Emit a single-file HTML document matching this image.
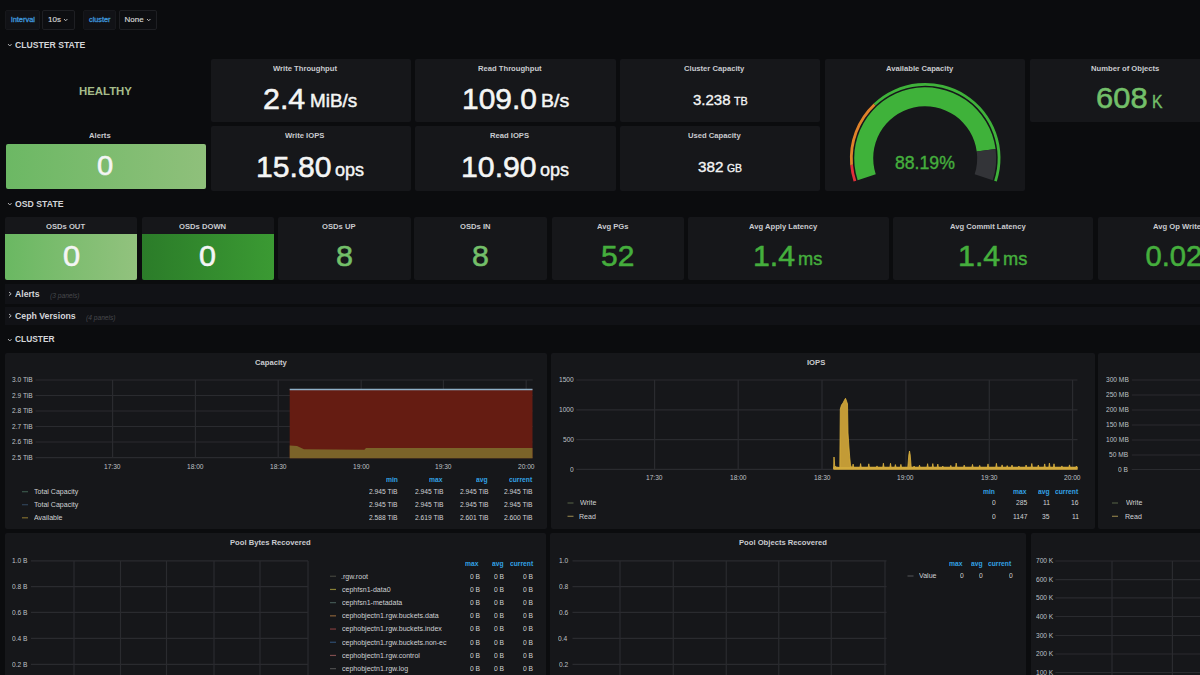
<!DOCTYPE html>
<html><head><meta charset="utf-8"><title>Ceph Cluster - Grafana</title><style>
html,body{margin:0;padding:0;}
body{width:1200px;height:675px;overflow:hidden;background:#0b0c0e;position:relative;font-family:"Liberation Sans",sans-serif;}
.t{position:absolute;white-space:nowrap;transform-origin:0 0;}
.p{position:absolute;}
.s{position:absolute;overflow:visible;}
</style></head><body>
<div class="p" style="left:5px;top:10px;width:35.30px;height:19.70px;background:#111216;border:1px solid #17181c;box-sizing:border-box;border-radius:2px"></div>
<div class="p" style="left:42px;top:10px;width:32.70px;height:19.70px;background:#0d0e11;border:1px solid #1e1f23;box-sizing:border-box;border-radius:2px"></div>
<div class="p" style="left:83px;top:10px;width:33.30px;height:19.70px;background:#111216;border:1px solid #17181c;box-sizing:border-box;border-radius:2px"></div>
<div class="p" style="left:119px;top:10px;width:38.00px;height:19.70px;background:#0d0e11;border:1px solid #1e1f23;box-sizing:border-box;border-radius:2px"></div>
<div class="t" style="left:10.72px;top:17.01px;font-size:6.48px;line-height:6.48px;color:#3d92d6;transform:scaleX(1.148);-webkit-text-stroke:0.3px #3d92d6;">interval</div>
<div class="t" style="left:47.90px;top:16.35px;font-size:7.86px;line-height:7.86px;color:#d8d9da;transform:scaleX(1.018);-webkit-text-stroke:0.15px #d8d9da;">10s</div>
<div class="t" style="left:89.21px;top:17.01px;font-size:6.48px;line-height:6.48px;color:#3d92d6;transform:scaleX(1.123);-webkit-text-stroke:0.3px #3d92d6;">cluster</div>
<div class="t" style="left:124.56px;top:16.25px;font-size:7.97px;line-height:7.97px;color:#d8d9da;-webkit-text-stroke:0.15px #d8d9da;">None</div>
<svg class="s" style="left:62.5px;top:17.8px" width="5.4" height="3.8"><path d="M1 1 L2.70 2.80 L4.40 1" fill="none" stroke="#c8c9ca" stroke-width="0.9"/></svg>
<svg class="s" style="left:146px;top:17.8px" width="5.4" height="3.8"><path d="M1 1 L2.70 2.80 L4.40 1" fill="none" stroke="#c8c9ca" stroke-width="0.9"/></svg>
<svg class="s" style="left:7.3px;top:43.2px" width="5.6" height="4.0"><path d="M1 1 L2.80 3.00 L4.60 1" fill="none" stroke="#a8a9ab" stroke-width="1.0"/></svg>
<div class="t" style="left:14.95px;top:40.30px;font-size:9.80px;line-height:9.80px;color:#d3d5d9;font-weight:bold;transform:scaleX(0.882);">CLUSTER STATE</div>
<svg class="s" style="left:7.3px;top:202px" width="5.6" height="4.0"><path d="M1 1 L2.80 3.00 L4.60 1" fill="none" stroke="#a8a9ab" stroke-width="1.0"/></svg>
<div class="t" style="left:14.85px;top:198.90px;font-size:9.80px;line-height:9.80px;color:#d3d5d9;font-weight:bold;transform:scaleX(0.888);">OSD STATE</div>
<div class="p" style="left:5px;top:283.5px;width:1195.00px;height:20.50px;background:#111216;"></div>
<div class="p" style="left:5px;top:307.3px;width:1195.00px;height:17.70px;background:#111216;"></div>
<svg class="s" style="left:7.5px;top:290.5px" width="4.2" height="5.6"><path d="M1 1 L3.20 2.80 L1 4.60" fill="none" stroke="#b0b1b3" stroke-width="1.0"/></svg>
<svg class="s" style="left:7.5px;top:313px" width="4.2" height="5.6"><path d="M1 1 L3.20 2.80 L1 4.60" fill="none" stroke="#b0b1b3" stroke-width="1.0"/></svg>
<div class="t" style="left:15.28px;top:290.11px;font-size:8.97px;line-height:8.97px;color:#d3d5d9;font-weight:bold;transform:scaleX(0.966);">Alerts</div>
<div class="t" style="left:49.70px;top:291.67px;font-size:7.00px;line-height:7.00px;color:#47494d;font-style:italic;transform:scaleX(0.950);">(3 panels)</div>
<div class="t" style="left:15.15px;top:312.28px;font-size:9.24px;line-height:9.24px;color:#d3d5d9;font-weight:bold;transform:scaleX(0.946);">Ceph Versions</div>
<div class="t" style="left:85.70px;top:314.17px;font-size:7.00px;line-height:7.00px;color:#47494d;font-style:italic;transform:scaleX(0.950);">(4 panels)</div>
<svg class="s" style="left:7.3px;top:338px" width="5.6" height="4.0"><path d="M1 1 L2.80 3.00 L4.60 1" fill="none" stroke="#a8a9ab" stroke-width="1.0"/></svg>
<div class="t" style="left:15.17px;top:334.20px;font-size:9.80px;line-height:9.80px;color:#d3d5d9;font-weight:bold;transform:scaleX(0.854);">CLUSTER</div>
<div class="t" style="left:78.76px;top:85.93px;font-size:11.30px;line-height:11.30px;color:#a6bd8a;font-weight:bold;transform:scaleX(1.008);">HEALTHY</div>
<div class="t" style="left:89.23px;top:131.83px;font-size:8.00px;line-height:8.00px;color:#c9cbcf;font-weight:bold;transform:scaleX(0.955);">Alerts</div>
<div class="p" style="left:5.5px;top:143.8px;width:200.00px;height:45.70px;background:linear-gradient(90deg,#6cb864,#8fc07b);border-radius:2px"></div>
<div class="t" style="left:97.33px;top:152.27px;font-size:28.14px;line-height:28.14px;color:#f4f5f5;transform:scaleX(1.036);-webkit-text-stroke:0.55px #f4f5f5;">0</div>
<div class="p" style="left:210.5px;top:58.5px;width:200.00px;height:63.50px;background:#16171a;border-radius:2px"></div>
<div class="p" style="left:210.5px;top:125.5px;width:200.00px;height:65.00px;background:#16171a;border-radius:2px"></div>
<div class="p" style="left:415px;top:58.5px;width:200.50px;height:63.50px;background:#16171a;border-radius:2px"></div>
<div class="p" style="left:415px;top:125.5px;width:200.50px;height:65.00px;background:#16171a;border-radius:2px"></div>
<div class="p" style="left:620px;top:58.5px;width:200.00px;height:63.50px;background:#16171a;border-radius:2px"></div>
<div class="p" style="left:620px;top:125.5px;width:200.00px;height:65.00px;background:#16171a;border-radius:2px"></div>
<div class="p" style="left:825px;top:59px;width:200.00px;height:132.00px;background:#16171a;border-radius:2px"></div>
<div class="p" style="left:1030px;top:59px;width:202.00px;height:63.00px;background:#16171a;border-radius:2px"></div>
<div class="t" style="left:273.08px;top:64.93px;font-size:8.00px;line-height:8.00px;color:#c9cbcf;font-weight:bold;transform:scaleX(0.955);">Write Throughput</div>
<div class="t" style="left:285.48px;top:132.03px;font-size:8.00px;line-height:8.00px;color:#c9cbcf;font-weight:bold;transform:scaleX(0.955);">Write IOPS</div>
<div class="t" style="left:477.67px;top:64.93px;font-size:8.00px;line-height:8.00px;color:#c9cbcf;font-weight:bold;transform:scaleX(0.955);">Read Throughput</div>
<div class="t" style="left:490.37px;top:132.03px;font-size:8.00px;line-height:8.00px;color:#c9cbcf;font-weight:bold;transform:scaleX(0.955);">Read IOPS</div>
<div class="t" style="left:684.23px;top:64.93px;font-size:8.00px;line-height:8.00px;color:#c9cbcf;font-weight:bold;transform:scaleX(0.955);">Cluster Capacity</div>
<div class="t" style="left:688.47px;top:132.03px;font-size:8.00px;line-height:8.00px;color:#c9cbcf;font-weight:bold;transform:scaleX(0.955);">Used Capacity</div>
<div class="t" style="left:886.11px;top:64.93px;font-size:8.00px;line-height:8.00px;color:#c9cbcf;font-weight:bold;transform:scaleX(0.955);">Available Capacity</div>
<div class="t" style="left:1090.53px;top:64.93px;font-size:8.00px;line-height:8.00px;color:#c9cbcf;font-weight:bold;transform:scaleX(0.955);">Number of Objects</div>
<div class="t" style="left:262.98px;top:83.70px;font-size:29.29px;line-height:29.29px;color:#f4f5f5;transform:scaleX(1.037);-webkit-text-stroke:0.55px #f4f5f5;">2.4</div>
<div class="t" style="left:309.99px;top:93.32px;font-size:17.93px;line-height:17.93px;color:#f4f5f5;transform:scaleX(1.052);-webkit-text-stroke:0.45px #f4f5f5;">MiB/s</div>
<div class="t" style="left:255.74px;top:151.70px;font-size:29.29px;line-height:29.29px;color:#f4f5f5;transform:scaleX(1.029);-webkit-text-stroke:0.55px #f4f5f5;">15.80</div>
<div class="t" style="left:335.28px;top:160.75px;font-size:18.60px;line-height:18.60px;color:#f4f5f5;transform:scaleX(0.970);-webkit-text-stroke:0.45px #f4f5f5;">ops</div>
<div class="t" style="left:461.76px;top:83.70px;font-size:29.29px;line-height:29.29px;color:#f4f5f5;transform:scaleX(1.022);-webkit-text-stroke:0.55px #f4f5f5;">109.0</div>
<div class="t" style="left:540.94px;top:93.32px;font-size:17.93px;line-height:17.93px;color:#f4f5f5;transform:scaleX(1.090);-webkit-text-stroke:0.45px #f4f5f5;">B/s</div>
<div class="t" style="left:460.93px;top:151.96px;font-size:29.57px;line-height:29.57px;color:#f4f5f5;transform:scaleX(1.023);-webkit-text-stroke:0.55px #f4f5f5;">10.90</div>
<div class="t" style="left:539.98px;top:161.25px;font-size:18.60px;line-height:18.60px;color:#f4f5f5;transform:scaleX(0.970);-webkit-text-stroke:0.45px #f4f5f5;">ops</div>
<div class="t" style="left:692.60px;top:92.06px;font-size:15.29px;line-height:15.29px;color:#f4f5f5;transform:scaleX(0.981);-webkit-text-stroke:0.35px #f4f5f5;">3.238</div>
<div class="t" style="left:733.58px;top:96.04px;font-size:10.58px;line-height:10.58px;color:#f4f5f5;transform:scaleX(1.020);-webkit-text-stroke:0.3px #f4f5f5;">TB</div>
<div class="t" style="left:698.19px;top:159.84px;font-size:14.71px;line-height:14.71px;color:#f4f5f5;transform:scaleX(1.036);-webkit-text-stroke:0.35px #f4f5f5;">382</div>
<div class="t" style="left:726.68px;top:163.83px;font-size:10.00px;line-height:10.00px;color:#f4f5f5;transform:scaleX(1.041);-webkit-text-stroke:0.3px #f4f5f5;">GB</div>
<div class="t" style="left:894.71px;top:154.28px;font-size:18.57px;line-height:18.57px;color:#45ae3d;transform:scaleX(0.950);-webkit-text-stroke:0.4px #45ae3d;">88.19%</div>
<div class="t" style="left:1095.95px;top:84.31px;font-size:28.57px;line-height:28.57px;color:#73bf69;transform:scaleX(1.082);-webkit-text-stroke:0.55px #73bf69;">608</div>
<div class="t" style="left:1152.25px;top:93.16px;font-size:18.12px;line-height:18.12px;color:#73bf69;transform:scaleX(0.864);-webkit-text-stroke:0.4px #73bf69;">K</div>
<svg class="s" style="left:0;top:0" width="1200" height="675"><path d="M857.67 180.24 A71 71 0 1 1 995.59 149.02 L976.75 151.50 A52 52 0 1 0 875.75 174.37 Z" fill="#3fb23a"/><path d="M995.59 149.02 A71 71 0 0 1 992.73 180.24 L974.65 174.37 A52 52 0 0 0 976.75 151.50 Z" fill="#333438"/><path d="M853.59 181.57 A75.3 75.3 0 0 1 850.19 164.92 L852.98 164.67 A72.5 72.5 0 0 0 856.25 180.70 Z" fill="#e0303a"/><path d="M850.19 164.92 A75.3 75.3 0 0 1 873.65 103.41 L875.57 105.45 A72.5 72.5 0 0 0 852.98 164.67 Z" fill="#e0822a"/><path d="M873.65 103.41 A75.3 75.3 0 0 1 996.81 181.57 L994.15 180.70 A72.5 72.5 0 0 0 875.57 105.45 Z" fill="#3fb23a"/></svg>
<div class="p" style="left:5px;top:217px;width:132.00px;height:63.00px;background:#16171a;border-radius:2px"></div>
<div class="p" style="left:5px;top:234px;width:132.00px;height:46.00px;background:linear-gradient(90deg,#6ab862,#92c27e);border-radius:0 0 2px 2px"></div>
<div class="p" style="left:142px;top:217px;width:131.50px;height:63.00px;background:#16171a;border-radius:2px"></div>
<div class="p" style="left:142px;top:234px;width:131.50px;height:46.00px;background:linear-gradient(90deg,#2b7c29,#3b9a33);border-radius:0 0 2px 2px"></div>
<div class="p" style="left:278px;top:217px;width:133.30px;height:63.00px;background:#16171a;border-radius:2px"></div>
<div class="p" style="left:414px;top:217px;width:132.70px;height:63.00px;background:#16171a;border-radius:2px"></div>
<div class="p" style="left:551.5px;top:217px;width:132.50px;height:63.00px;background:#16171a;border-radius:2px"></div>
<div class="p" style="left:687.5px;top:217px;width:201.80px;height:63.00px;background:#16171a;border-radius:2px"></div>
<div class="p" style="left:893px;top:217px;width:200.30px;height:63.00px;background:#16171a;border-radius:2px"></div>
<div class="p" style="left:1097.5px;top:217px;width:134.50px;height:63.00px;background:#16171a;border-radius:2px"></div>
<div class="t" style="left:46.37px;top:222.83px;font-size:8.00px;line-height:8.00px;color:#c9cbcf;font-weight:bold;transform:scaleX(0.955);">OSDs OUT</div>
<div class="t" style="left:179.15px;top:222.83px;font-size:8.00px;line-height:8.00px;color:#c9cbcf;font-weight:bold;transform:scaleX(0.955);">OSDs DOWN</div>
<div class="t" style="left:322.39px;top:222.83px;font-size:8.00px;line-height:8.00px;color:#c9cbcf;font-weight:bold;transform:scaleX(0.955);">OSDs UP</div>
<div class="t" style="left:460.12px;top:222.83px;font-size:8.00px;line-height:8.00px;color:#c9cbcf;font-weight:bold;transform:scaleX(0.955);">OSDs IN</div>
<div class="t" style="left:596.78px;top:222.83px;font-size:8.00px;line-height:8.00px;color:#c9cbcf;font-weight:bold;transform:scaleX(0.955);">Avg PGs</div>
<div class="t" style="left:748.83px;top:222.83px;font-size:8.00px;line-height:8.00px;color:#c9cbcf;font-weight:bold;transform:scaleX(0.955);">Avg Apply Latency</div>
<div class="t" style="left:949.77px;top:222.83px;font-size:8.00px;line-height:8.00px;color:#c9cbcf;font-weight:bold;transform:scaleX(0.955);">Avg Commit Latency</div>
<div class="t" style="left:1152.94px;top:222.83px;font-size:8.00px;line-height:8.00px;color:#c9cbcf;font-weight:bold;transform:scaleX(0.955);">Avg Op Write Latency</div>
<div class="t" style="left:62.77px;top:241.81px;font-size:28.57px;line-height:28.57px;color:#f4f5f5;transform:scaleX(1.079);-webkit-text-stroke:0.55px #f4f5f5;">0</div>
<div class="t" style="left:199.48px;top:241.81px;font-size:28.57px;line-height:28.57px;color:#f4f5f5;transform:scaleX(1.065);-webkit-text-stroke:0.55px #f4f5f5;">0</div>
<div class="t" style="left:336.12px;top:241.53px;font-size:29.14px;line-height:29.14px;color:#73bf69;transform:scaleX(1.051);-webkit-text-stroke:0.55px #73bf69;">8</div>
<div class="t" style="left:472.33px;top:241.53px;font-size:29.14px;line-height:29.14px;color:#73bf69;transform:scaleX(1.044);-webkit-text-stroke:0.55px #73bf69;">8</div>
<div class="t" style="left:601.00px;top:241.16px;font-size:29.57px;line-height:29.57px;color:#45ae3d;transform:scaleX(1.014);-webkit-text-stroke:0.55px #45ae3d;">52</div>
<div class="t" style="left:753.04px;top:241.76px;font-size:28.99px;line-height:28.99px;color:#45ae3d;transform:scaleX(1.042);-webkit-text-stroke:0.55px #45ae3d;">1.4</div>
<div class="t" style="left:798.41px;top:250.38px;font-size:18.80px;line-height:18.80px;color:#45ae3d;transform:scaleX(0.970);-webkit-text-stroke:0.45px #45ae3d;">ms</div>
<div class="t" style="left:957.52px;top:241.76px;font-size:28.99px;line-height:28.99px;color:#45ae3d;transform:scaleX(1.047);-webkit-text-stroke:0.55px #45ae3d;">1.4</div>
<div class="t" style="left:1002.81px;top:250.38px;font-size:18.80px;line-height:18.80px;color:#45ae3d;transform:scaleX(0.970);-webkit-text-stroke:0.45px #45ae3d;">ms</div>
<div class="t" style="left:1145.53px;top:241.58px;font-size:29.20px;line-height:29.20px;color:#45ae3d;-webkit-text-stroke:0.55px #45ae3d;">0.02</div>
<div class="p" style="left:4.5px;top:352.5px;width:542.20px;height:176.50px;background:#16171a;border-radius:2px"></div>
<div class="p" style="left:551px;top:352.5px;width:543.80px;height:176.50px;background:#16171a;border-radius:2px"></div>
<div class="p" style="left:1097.8px;top:352.5px;width:134.20px;height:176.50px;background:#16171a;border-radius:2px"></div>
<div class="p" style="left:4.6px;top:532.6px;width:541.40px;height:157.40px;background:#16171a;border-radius:2px"></div>
<div class="p" style="left:550px;top:532.6px;width:476.00px;height:157.40px;background:#16171a;border-radius:2px"></div>
<div class="p" style="left:1030.5px;top:532.6px;width:201.50px;height:157.40px;background:#16171a;border-radius:2px"></div>
<svg class="s" style="left:0;top:0" width="1200" height="675"><line x1="35.5" y1="380" x2="532.7" y2="380" stroke="#2a2b2f" stroke-width="1.2"/><line x1="35.5" y1="395.5" x2="532.7" y2="395.5" stroke="#2a2b2f" stroke-width="1.2"/><line x1="35.5" y1="411" x2="532.7" y2="411" stroke="#2a2b2f" stroke-width="1.2"/><line x1="35.5" y1="426.5" x2="532.7" y2="426.5" stroke="#2a2b2f" stroke-width="1.2"/><line x1="35.5" y1="442" x2="532.7" y2="442" stroke="#2a2b2f" stroke-width="1.2"/><line x1="35.5" y1="457.6" x2="532.7" y2="457.6" stroke="#2a2b2f" stroke-width="1.2"/><line x1="112.6" y1="380" x2="112.6" y2="457.6" stroke="#2a2b2f" stroke-width="1.2"/><line x1="195.4" y1="380" x2="195.4" y2="457.6" stroke="#2a2b2f" stroke-width="1.2"/><line x1="278.2" y1="380" x2="278.2" y2="457.6" stroke="#2a2b2f" stroke-width="1.2"/><line x1="361.2" y1="380" x2="361.2" y2="457.6" stroke="#2a2b2f" stroke-width="1.2"/><line x1="443.4" y1="380" x2="443.4" y2="457.6" stroke="#2a2b2f" stroke-width="1.2"/><line x1="526.2" y1="380" x2="526.2" y2="457.6" stroke="#2a2b2f" stroke-width="1.2"/><rect x="289.7" y="389" width="242.8" height="69.2" fill="#651c12"/><path d="M289.7 445.5 L297 446 L304 449.3 L364.4 449.8 L366 448 L532.5 448 L532.5 458.2 L289.7 458.2 Z" fill="#7b6329"/><line x1="289.7" y1="389.5" x2="532.5" y2="389.5" stroke="#8fb0c8" stroke-width="1.5"/><line x1="576.3" y1="380" x2="1077.5" y2="380" stroke="#2a2b2f" stroke-width="1.2"/><line x1="576.3" y1="409.8" x2="1077.5" y2="409.8" stroke="#2a2b2f" stroke-width="1.2"/><line x1="576.3" y1="439.7" x2="1077.5" y2="439.7" stroke="#2a2b2f" stroke-width="1.2"/><line x1="576.3" y1="469.3" x2="1077.5" y2="469.3" stroke="#2a2b2f" stroke-width="1.2"/><line x1="654.6" y1="380" x2="654.6" y2="469.3" stroke="#2a2b2f" stroke-width="1.2"/><line x1="738.2" y1="380" x2="738.2" y2="469.3" stroke="#2a2b2f" stroke-width="1.2"/><line x1="822" y1="380" x2="822" y2="469.3" stroke="#2a2b2f" stroke-width="1.2"/><line x1="905.9" y1="380" x2="905.9" y2="469.3" stroke="#2a2b2f" stroke-width="1.2"/><line x1="989.3" y1="380" x2="989.3" y2="469.3" stroke="#2a2b2f" stroke-width="1.2"/><line x1="1072.6" y1="380" x2="1072.6" y2="469.3" stroke="#2a2b2f" stroke-width="1.2"/><path d="M833.5 469.6 L833.5 469.0 L833.7 466.0 L834.0 457.0 L834.7 465.5 L836.0 467.0 L839.8 467.5 L840.3 409.0 L841.5 405.0 L843.0 403.0 L844.5 400.0 L845.5 398.3 L846.5 401.0 L847.5 404.0 L848.0 433.0 L849.0 448.0 L849.7 457.0 L850.5 465.0 L851.5 467.2 L852.5 467.2 L853.1 464.1 L853.7 467.2 L860.0 467.2 L860.6 463.6 L861.2 467.2 L868.2 467.2 L868.8 463.8 L869.4 467.2 L876.4 467.2 L877.0 465.9 L877.6 467.2 L882.8 467.2 L883.4 463.2 L884.0 467.2 L889.9 467.2 L890.5 463.3 L891.1 467.2 L894.8 467.2 L895.4 464.6 L896.0 467.2 L900.3 467.2 L900.9 464.4 L901.5 467.2 L907.1 467.2 L907.8 467.2 L908.8 455.0 L909.5 451.0 L910.2 455.0 L911.2 467.2 L913.5 467.2 L914.1 466.0 L914.7 467.2 L918.9 467.2 L919.5 465.2 L920.1 467.2 L927.0 467.2 L927.6 463.7 L928.2 467.2 L932.2 467.2 L932.8 463.6 L933.4 467.2 L937.2 467.2 L937.8 464.1 L938.4 467.2 L942.2 467.2 L942.8 466.0 L943.4 467.2 L950.2 467.2 L950.8 465.4 L951.4 467.2 L955.6 467.2 L956.2 463.1 L956.8 467.2 L963.6 467.2 L964.2 465.1 L964.8 467.2 L971.9 467.2 L972.5 464.4 L973.1 467.2 L979.1 467.2 L979.7 465.4 L980.3 467.2 L987.4 467.2 L988.0 463.9 L988.6 467.2 L995.8 467.2 L996.4 463.3 L997.0 467.2 L1001.5 467.2 L1002.1 464.9 L1002.7 467.2 L1006.6 467.2 L1007.2 465.6 L1007.8 467.2 L1011.4 467.2 L1012.0 465.1 L1012.6 467.2 L1018.3 467.2 L1018.9 466.0 L1019.5 467.2 L1025.5 467.2 L1026.1 465.0 L1026.7 467.2 L1031.2 467.2 L1031.8 463.5 L1032.4 467.2 L1037.7 467.2 L1038.3 465.1 L1038.9 467.2 L1044.1 467.2 L1044.7 463.9 L1045.3 467.2 L1048.8 467.2 L1049.4 463.1 L1050.0 467.2 L1053.4 467.2 L1054.0 463.8 L1054.6 467.2 L1061.3 467.2 L1061.9 465.9 L1062.5 467.2 L1068.9 467.2 L1069.5 464.9 L1070.1 467.2 L1075.8 467.2 L1076.4 466.0 L1077.0 467.2 L1077.5 467.2 L1077.5 469.6 Z" fill="#c39b36"/><path d="M833.5 469.0 L833.7 466.0 L834.0 457.0 L834.7 465.5 L836.0 467.0 L839.8 467.5 L840.3 409.0 L841.5 405.0 L843.0 403.0 L844.5 400.0 L845.5 398.3 L846.5 401.0 L847.5 404.0 L848.0 433.0 L849.0 448.0 L849.7 457.0 L850.5 465.0 L851.5 467.2 L852.5 467.2 L853.1 464.1 L853.7 467.2 L860.0 467.2 L860.6 463.6 L861.2 467.2 L868.2 467.2 L868.8 463.8 L869.4 467.2 L876.4 467.2 L877.0 465.9 L877.6 467.2 L882.8 467.2 L883.4 463.2 L884.0 467.2 L889.9 467.2 L890.5 463.3 L891.1 467.2 L894.8 467.2 L895.4 464.6 L896.0 467.2 L900.3 467.2 L900.9 464.4 L901.5 467.2 L907.1 467.2 L907.8 467.2 L908.8 455.0 L909.5 451.0 L910.2 455.0 L911.2 467.2 L913.5 467.2 L914.1 466.0 L914.7 467.2 L918.9 467.2 L919.5 465.2 L920.1 467.2 L927.0 467.2 L927.6 463.7 L928.2 467.2 L932.2 467.2 L932.8 463.6 L933.4 467.2 L937.2 467.2 L937.8 464.1 L938.4 467.2 L942.2 467.2 L942.8 466.0 L943.4 467.2 L950.2 467.2 L950.8 465.4 L951.4 467.2 L955.6 467.2 L956.2 463.1 L956.8 467.2 L963.6 467.2 L964.2 465.1 L964.8 467.2 L971.9 467.2 L972.5 464.4 L973.1 467.2 L979.1 467.2 L979.7 465.4 L980.3 467.2 L987.4 467.2 L988.0 463.9 L988.6 467.2 L995.8 467.2 L996.4 463.3 L997.0 467.2 L1001.5 467.2 L1002.1 464.9 L1002.7 467.2 L1006.6 467.2 L1007.2 465.6 L1007.8 467.2 L1011.4 467.2 L1012.0 465.1 L1012.6 467.2 L1018.3 467.2 L1018.9 466.0 L1019.5 467.2 L1025.5 467.2 L1026.1 465.0 L1026.7 467.2 L1031.2 467.2 L1031.8 463.5 L1032.4 467.2 L1037.7 467.2 L1038.3 465.1 L1038.9 467.2 L1044.1 467.2 L1044.7 463.9 L1045.3 467.2 L1048.8 467.2 L1049.4 463.1 L1050.0 467.2 L1053.4 467.2 L1054.0 463.8 L1054.6 467.2 L1061.3 467.2 L1061.9 465.9 L1062.5 467.2 L1068.9 467.2 L1069.5 464.9 L1070.1 467.2 L1075.8 467.2 L1076.4 466.0 L1077.0 467.2 L1077.5 467.2" fill="none" stroke="#dcb23e" stroke-width="0.8"/><rect x="833.5" y="467" width="244" height="2.6" fill="#d2aa3c"/><line x1="1131.8" y1="380" x2="1200" y2="380" stroke="#2a2b2f" stroke-width="1.2"/><line x1="1131.8" y1="395" x2="1200" y2="395" stroke="#2a2b2f" stroke-width="1.2"/><line x1="1131.8" y1="410" x2="1200" y2="410" stroke="#2a2b2f" stroke-width="1.2"/><line x1="1131.8" y1="425" x2="1200" y2="425" stroke="#2a2b2f" stroke-width="1.2"/><line x1="1131.8" y1="440" x2="1200" y2="440" stroke="#2a2b2f" stroke-width="1.2"/><line x1="1131.8" y1="455" x2="1200" y2="455" stroke="#2a2b2f" stroke-width="1.2"/><line x1="1131.8" y1="469.5" x2="1200" y2="469.5" stroke="#2a2b2f" stroke-width="1.2"/><line x1="31" y1="560.9" x2="308" y2="560.9" stroke="#2a2b2f" stroke-width="1.2"/><line x1="31" y1="586.6" x2="308" y2="586.6" stroke="#2a2b2f" stroke-width="1.2"/><line x1="31" y1="612.3" x2="308" y2="612.3" stroke="#2a2b2f" stroke-width="1.2"/><line x1="31" y1="638.3" x2="308" y2="638.3" stroke="#2a2b2f" stroke-width="1.2"/><line x1="31" y1="664.4" x2="308" y2="664.4" stroke="#2a2b2f" stroke-width="1.2"/><line x1="74" y1="560.9" x2="74" y2="675" stroke="#2a2b2f" stroke-width="1.2"/><line x1="120.5" y1="560.9" x2="120.5" y2="675" stroke="#2a2b2f" stroke-width="1.2"/><line x1="166.5" y1="560.9" x2="166.5" y2="675" stroke="#2a2b2f" stroke-width="1.2"/><line x1="214" y1="560.9" x2="214" y2="675" stroke="#2a2b2f" stroke-width="1.2"/><line x1="260" y1="560.9" x2="260" y2="675" stroke="#2a2b2f" stroke-width="1.2"/><line x1="308" y1="560.9" x2="308" y2="675" stroke="#2a2b2f" stroke-width="1.2"/><line x1="572.5" y1="560.8" x2="886.5" y2="560.8" stroke="#2a2b2f" stroke-width="1.2"/><line x1="572.5" y1="586.6" x2="886.5" y2="586.6" stroke="#2a2b2f" stroke-width="1.2"/><line x1="572.5" y1="612.3" x2="886.5" y2="612.3" stroke="#2a2b2f" stroke-width="1.2"/><line x1="572.5" y1="638.3" x2="886.5" y2="638.3" stroke="#2a2b2f" stroke-width="1.2"/><line x1="572.5" y1="664.4" x2="886.5" y2="664.4" stroke="#2a2b2f" stroke-width="1.2"/><line x1="620" y1="560.8" x2="620" y2="675" stroke="#2a2b2f" stroke-width="1.2"/><line x1="673.25" y1="560.8" x2="673.25" y2="675" stroke="#2a2b2f" stroke-width="1.2"/><line x1="726.25" y1="560.8" x2="726.25" y2="675" stroke="#2a2b2f" stroke-width="1.2"/><line x1="778.75" y1="560.8" x2="778.75" y2="675" stroke="#2a2b2f" stroke-width="1.2"/><line x1="831.25" y1="560.8" x2="831.25" y2="675" stroke="#2a2b2f" stroke-width="1.2"/><line x1="885" y1="560.8" x2="885" y2="675" stroke="#2a2b2f" stroke-width="1.2"/><line x1="1055.4" y1="561" x2="1200" y2="561" stroke="#2a2b2f" stroke-width="1.2"/><line x1="1055.4" y1="579.6" x2="1200" y2="579.6" stroke="#2a2b2f" stroke-width="1.2"/><line x1="1055.4" y1="597.8" x2="1200" y2="597.8" stroke="#2a2b2f" stroke-width="1.2"/><line x1="1055.4" y1="616.5" x2="1200" y2="616.5" stroke="#2a2b2f" stroke-width="1.2"/><line x1="1055.4" y1="635.5" x2="1200" y2="635.5" stroke="#2a2b2f" stroke-width="1.2"/><line x1="1055.4" y1="654" x2="1200" y2="654" stroke="#2a2b2f" stroke-width="1.2"/><line x1="1055.4" y1="672.5" x2="1200" y2="672.5" stroke="#2a2b2f" stroke-width="1.2"/><line x1="1112" y1="561" x2="1112" y2="675" stroke="#2a2b2f" stroke-width="1.2"/><line x1="1172.4" y1="561" x2="1172.4" y2="675" stroke="#2a2b2f" stroke-width="1.2"/><line x1="22" y1="491.7" x2="28" y2="491.7" stroke="#4e7a66" stroke-width="1.2" opacity="0.65"/><line x1="22" y1="504.7" x2="28" y2="504.7" stroke="#3e5a78" stroke-width="1.2" opacity="0.65"/><line x1="22" y1="517.8" x2="28" y2="517.8" stroke="#b89a3a" stroke-width="1.2" opacity="0.65"/><line x1="567.5" y1="503" x2="573.5" y2="503" stroke="#6b7a55" stroke-width="1.2" opacity="0.65"/><line x1="567.5" y1="516.3" x2="573.5" y2="516.3" stroke="#c8b060" stroke-width="1.2" opacity="0.65"/><line x1="1112" y1="503" x2="1118" y2="503" stroke="#6b7a55" stroke-width="1.2" opacity="0.65"/><line x1="1112" y1="516.3" x2="1118" y2="516.3" stroke="#c8b060" stroke-width="1.2" opacity="0.65"/><line x1="330" y1="576.25" x2="336" y2="576.25" stroke="#5a5b50" stroke-width="1.2" opacity="0.65"/><line x1="330" y1="589.45" x2="336" y2="589.45" stroke="#c6b846" stroke-width="1.2" opacity="0.65"/><line x1="330" y1="602.65" x2="336" y2="602.65" stroke="#5b7a72" stroke-width="1.2" opacity="0.65"/><line x1="330" y1="615.85" x2="336" y2="615.85" stroke="#c88a4a" stroke-width="1.2" opacity="0.65"/><line x1="330" y1="629.05" x2="336" y2="629.05" stroke="#b85050" stroke-width="1.2" opacity="0.65"/><line x1="330" y1="642.25" x2="336" y2="642.25" stroke="#3d6aa0" stroke-width="1.2" opacity="0.65"/><line x1="330" y1="655.45" x2="336" y2="655.45" stroke="#b86a6a" stroke-width="1.2" opacity="0.65"/><line x1="330" y1="668.65" x2="336" y2="668.65" stroke="#6a6a6a" stroke-width="1.2" opacity="0.65"/><line x1="907.5" y1="576" x2="913.5" y2="576" stroke="#6a6b6d" stroke-width="1.2" opacity="0.65"/></svg>
<div class="t" style="left:254.96px;top:358.73px;font-size:8.00px;line-height:8.00px;color:#c9cbcf;font-weight:bold;transform:scaleX(0.955);">Capacity</div>
<div class="t" style="left:12.33px;top:376.42px;font-size:7.20px;line-height:7.20px;color:#bfc2c6;transform:scaleX(0.920);">3.0 TiB</div>
<div class="t" style="left:12.33px;top:391.92px;font-size:7.20px;line-height:7.20px;color:#bfc2c6;transform:scaleX(0.920);">2.9 TiB</div>
<div class="t" style="left:12.33px;top:407.42px;font-size:7.20px;line-height:7.20px;color:#bfc2c6;transform:scaleX(0.920);">2.8 TiB</div>
<div class="t" style="left:12.33px;top:422.92px;font-size:7.20px;line-height:7.20px;color:#bfc2c6;transform:scaleX(0.920);">2.7 TiB</div>
<div class="t" style="left:12.33px;top:438.42px;font-size:7.20px;line-height:7.20px;color:#bfc2c6;transform:scaleX(0.920);">2.6 TiB</div>
<div class="t" style="left:12.33px;top:454.02px;font-size:7.20px;line-height:7.20px;color:#bfc2c6;transform:scaleX(0.920);">2.5 TiB</div>
<div class="t" style="left:104.19px;top:462.72px;font-size:7.20px;line-height:7.20px;color:#bfc2c6;transform:scaleX(0.920);">17:30</div>
<div class="t" style="left:186.99px;top:462.72px;font-size:7.20px;line-height:7.20px;color:#bfc2c6;transform:scaleX(0.920);">18:00</div>
<div class="t" style="left:269.79px;top:462.72px;font-size:7.20px;line-height:7.20px;color:#bfc2c6;transform:scaleX(0.920);">18:30</div>
<div class="t" style="left:352.79px;top:462.72px;font-size:7.20px;line-height:7.20px;color:#bfc2c6;transform:scaleX(0.920);">19:00</div>
<div class="t" style="left:434.99px;top:462.72px;font-size:7.20px;line-height:7.20px;color:#bfc2c6;transform:scaleX(0.920);">19:30</div>
<div class="t" style="left:517.87px;top:462.72px;font-size:7.20px;line-height:7.20px;color:#bfc2c6;transform:scaleX(0.920);">20:00</div>
<div class="t" style="left:33.86px;top:488.02px;font-size:7.30px;line-height:7.30px;color:#cfd1d4;transform:scaleX(0.965);">Total Capacity</div>
<div class="t" style="left:33.86px;top:501.02px;font-size:7.30px;line-height:7.30px;color:#cfd1d4;transform:scaleX(0.965);">Total Capacity</div>
<div class="t" style="left:34.00px;top:514.12px;font-size:7.30px;line-height:7.30px;color:#cfd1d4;transform:scaleX(0.965);">Available</div>
<div class="t" style="left:386.02px;top:475.57px;font-size:7.30px;line-height:7.30px;color:#33a2e5;font-weight:bold;transform:scaleX(0.920);">min</div>
<div class="t" style="left:428.88px;top:475.57px;font-size:7.30px;line-height:7.30px;color:#33a2e5;font-weight:bold;transform:scaleX(0.920);">max</div>
<div class="t" style="left:475.84px;top:475.57px;font-size:7.30px;line-height:7.30px;color:#33a2e5;font-weight:bold;transform:scaleX(0.920);">avg</div>
<div class="t" style="left:509.05px;top:475.57px;font-size:7.30px;line-height:7.30px;color:#33a2e5;font-weight:bold;transform:scaleX(0.920);">current</div>
<div class="t" style="left:369.36px;top:488.07px;font-size:7.30px;line-height:7.30px;color:#cfd1d4;transform:scaleX(0.920);">2.945 TiB</div>
<div class="t" style="left:414.56px;top:488.07px;font-size:7.30px;line-height:7.30px;color:#cfd1d4;transform:scaleX(0.920);">2.945 TiB</div>
<div class="t" style="left:459.76px;top:488.07px;font-size:7.30px;line-height:7.30px;color:#cfd1d4;transform:scaleX(0.920);">2.945 TiB</div>
<div class="t" style="left:504.46px;top:488.07px;font-size:7.30px;line-height:7.30px;color:#cfd1d4;transform:scaleX(0.920);">2.945 TiB</div>
<div class="t" style="left:369.36px;top:501.07px;font-size:7.30px;line-height:7.30px;color:#cfd1d4;transform:scaleX(0.920);">2.945 TiB</div>
<div class="t" style="left:414.56px;top:501.07px;font-size:7.30px;line-height:7.30px;color:#cfd1d4;transform:scaleX(0.920);">2.945 TiB</div>
<div class="t" style="left:459.76px;top:501.07px;font-size:7.30px;line-height:7.30px;color:#cfd1d4;transform:scaleX(0.920);">2.945 TiB</div>
<div class="t" style="left:504.46px;top:501.07px;font-size:7.30px;line-height:7.30px;color:#cfd1d4;transform:scaleX(0.920);">2.945 TiB</div>
<div class="t" style="left:369.36px;top:514.17px;font-size:7.30px;line-height:7.30px;color:#cfd1d4;transform:scaleX(0.920);">2.588 TiB</div>
<div class="t" style="left:414.56px;top:514.17px;font-size:7.30px;line-height:7.30px;color:#cfd1d4;transform:scaleX(0.920);">2.619 TiB</div>
<div class="t" style="left:459.76px;top:514.17px;font-size:7.30px;line-height:7.30px;color:#cfd1d4;transform:scaleX(0.920);">2.601 TiB</div>
<div class="t" style="left:504.46px;top:514.17px;font-size:7.30px;line-height:7.30px;color:#cfd1d4;transform:scaleX(0.920);">2.600 TiB</div>
<div class="t" style="left:806.76px;top:358.73px;font-size:8.00px;line-height:8.00px;color:#c9cbcf;font-weight:bold;transform:scaleX(0.955);">IOPS</div>
<div class="t" style="left:558.79px;top:376.42px;font-size:7.20px;line-height:7.20px;color:#bfc2c6;transform:scaleX(0.920);">1500</div>
<div class="t" style="left:558.79px;top:406.22px;font-size:7.20px;line-height:7.20px;color:#bfc2c6;transform:scaleX(0.920);">1000</div>
<div class="t" style="left:562.50px;top:436.12px;font-size:7.20px;line-height:7.20px;color:#bfc2c6;transform:scaleX(0.920);">500</div>
<div class="t" style="left:569.86px;top:465.72px;font-size:7.20px;line-height:7.20px;color:#bfc2c6;transform:scaleX(0.920);">0</div>
<div class="t" style="left:646.19px;top:473.72px;font-size:7.20px;line-height:7.20px;color:#bfc2c6;transform:scaleX(0.920);">17:30</div>
<div class="t" style="left:729.79px;top:473.72px;font-size:7.20px;line-height:7.20px;color:#bfc2c6;transform:scaleX(0.920);">18:00</div>
<div class="t" style="left:813.59px;top:473.72px;font-size:7.20px;line-height:7.20px;color:#bfc2c6;transform:scaleX(0.920);">18:30</div>
<div class="t" style="left:897.49px;top:473.72px;font-size:7.20px;line-height:7.20px;color:#bfc2c6;transform:scaleX(0.920);">19:00</div>
<div class="t" style="left:980.89px;top:473.72px;font-size:7.20px;line-height:7.20px;color:#bfc2c6;transform:scaleX(0.920);">19:30</div>
<div class="t" style="left:1064.27px;top:473.72px;font-size:7.20px;line-height:7.20px;color:#bfc2c6;transform:scaleX(0.920);">20:00</div>
<div class="t" style="left:579.96px;top:499.32px;font-size:7.30px;line-height:7.30px;color:#cfd1d4;transform:scaleX(0.965);">Write</div>
<div class="t" style="left:579.44px;top:512.62px;font-size:7.30px;line-height:7.30px;color:#cfd1d4;transform:scaleX(0.965);">Read</div>
<div class="t" style="left:983.32px;top:487.97px;font-size:7.30px;line-height:7.30px;color:#33a2e5;font-weight:bold;transform:scaleX(0.920);">min</div>
<div class="t" style="left:1013.08px;top:487.97px;font-size:7.30px;line-height:7.30px;color:#33a2e5;font-weight:bold;transform:scaleX(0.920);">max</div>
<div class="t" style="left:1038.34px;top:487.97px;font-size:7.30px;line-height:7.30px;color:#33a2e5;font-weight:bold;transform:scaleX(0.920);">avg</div>
<div class="t" style="left:1055.35px;top:487.97px;font-size:7.30px;line-height:7.30px;color:#33a2e5;font-weight:bold;transform:scaleX(0.920);">current</div>
<div class="t" style="left:991.81px;top:499.37px;font-size:7.30px;line-height:7.30px;color:#cfd1d4;transform:scaleX(0.920);">0</div>
<div class="t" style="left:1015.89px;top:499.37px;font-size:7.30px;line-height:7.30px;color:#cfd1d4;transform:scaleX(0.920);">285</div>
<div class="t" style="left:1042.95px;top:499.37px;font-size:7.30px;line-height:7.30px;color:#cfd1d4;transform:scaleX(0.920);">11</div>
<div class="t" style="left:1071.21px;top:499.37px;font-size:7.30px;line-height:7.30px;color:#cfd1d4;transform:scaleX(0.920);">16</div>
<div class="t" style="left:991.81px;top:512.57px;font-size:7.30px;line-height:7.30px;color:#cfd1d4;transform:scaleX(0.920);">0</div>
<div class="t" style="left:1012.70px;top:512.57px;font-size:7.30px;line-height:7.30px;color:#cfd1d4;transform:scaleX(0.920);">1147</div>
<div class="t" style="left:1042.41px;top:512.57px;font-size:7.30px;line-height:7.30px;color:#cfd1d4;transform:scaleX(0.920);">35</div>
<div class="t" style="left:1071.75px;top:512.57px;font-size:7.30px;line-height:7.30px;color:#cfd1d4;transform:scaleX(0.920);">11</div>
<div class="t" style="left:1105.51px;top:376.42px;font-size:7.20px;line-height:7.20px;color:#bfc2c6;transform:scaleX(0.920);">300 MB</div>
<div class="t" style="left:1105.51px;top:391.42px;font-size:7.20px;line-height:7.20px;color:#bfc2c6;transform:scaleX(0.920);">250 MB</div>
<div class="t" style="left:1105.51px;top:406.42px;font-size:7.20px;line-height:7.20px;color:#bfc2c6;transform:scaleX(0.920);">200 MB</div>
<div class="t" style="left:1105.51px;top:421.42px;font-size:7.20px;line-height:7.20px;color:#bfc2c6;transform:scaleX(0.920);">150 MB</div>
<div class="t" style="left:1105.51px;top:436.42px;font-size:7.20px;line-height:7.20px;color:#bfc2c6;transform:scaleX(0.920);">100 MB</div>
<div class="t" style="left:1109.19px;top:451.42px;font-size:7.20px;line-height:7.20px;color:#bfc2c6;transform:scaleX(0.920);">50 MB</div>
<div class="t" style="left:1118.40px;top:465.92px;font-size:7.20px;line-height:7.20px;color:#bfc2c6;transform:scaleX(0.920);">0 B</div>
<div class="t" style="left:1125.96px;top:499.32px;font-size:7.30px;line-height:7.30px;color:#cfd1d4;transform:scaleX(0.965);">Write</div>
<div class="t" style="left:1125.44px;top:512.62px;font-size:7.30px;line-height:7.30px;color:#cfd1d4;transform:scaleX(0.965);">Read</div>
<div class="t" style="left:230.26px;top:538.73px;font-size:8.00px;line-height:8.00px;color:#c9cbcf;font-weight:bold;transform:scaleX(0.955);">Pool Bytes Recovered</div>
<div class="t" style="left:11.76px;top:557.32px;font-size:7.20px;line-height:7.20px;color:#bfc2c6;transform:scaleX(0.920);">1.0 B</div>
<div class="t" style="left:11.76px;top:583.02px;font-size:7.20px;line-height:7.20px;color:#bfc2c6;transform:scaleX(0.920);">0.8 B</div>
<div class="t" style="left:11.76px;top:608.72px;font-size:7.20px;line-height:7.20px;color:#bfc2c6;transform:scaleX(0.920);">0.6 B</div>
<div class="t" style="left:11.76px;top:634.72px;font-size:7.20px;line-height:7.20px;color:#bfc2c6;transform:scaleX(0.920);">0.4 B</div>
<div class="t" style="left:11.76px;top:660.82px;font-size:7.20px;line-height:7.20px;color:#bfc2c6;transform:scaleX(0.920);">0.2 B</div>
<div class="t" style="left:465.08px;top:560.12px;font-size:7.30px;line-height:7.30px;color:#33a2e5;font-weight:bold;transform:scaleX(0.920);">max</div>
<div class="t" style="left:492.34px;top:560.12px;font-size:7.30px;line-height:7.30px;color:#33a2e5;font-weight:bold;transform:scaleX(0.920);">avg</div>
<div class="t" style="left:510.05px;top:560.12px;font-size:7.30px;line-height:7.30px;color:#33a2e5;font-weight:bold;transform:scaleX(0.920);">current</div>
<div class="t" style="left:341.37px;top:572.57px;font-size:7.30px;line-height:7.30px;color:#cfd1d4;transform:scaleX(0.965);">.rgw.root</div>
<div class="t" style="left:469.76px;top:572.62px;font-size:7.30px;line-height:7.30px;color:#cfd1d4;transform:scaleX(0.920);">0 B</div>
<div class="t" style="left:494.01px;top:572.62px;font-size:7.30px;line-height:7.30px;color:#cfd1d4;transform:scaleX(0.920);">0 B</div>
<div class="t" style="left:523.26px;top:572.62px;font-size:7.30px;line-height:7.30px;color:#cfd1d4;transform:scaleX(0.920);">0 B</div>
<div class="t" style="left:341.72px;top:585.77px;font-size:7.30px;line-height:7.30px;color:#cfd1d4;transform:scaleX(0.965);">cephfsn1-data0</div>
<div class="t" style="left:469.76px;top:585.82px;font-size:7.30px;line-height:7.30px;color:#cfd1d4;transform:scaleX(0.920);">0 B</div>
<div class="t" style="left:494.01px;top:585.82px;font-size:7.30px;line-height:7.30px;color:#cfd1d4;transform:scaleX(0.920);">0 B</div>
<div class="t" style="left:523.26px;top:585.82px;font-size:7.30px;line-height:7.30px;color:#cfd1d4;transform:scaleX(0.920);">0 B</div>
<div class="t" style="left:341.72px;top:598.97px;font-size:7.30px;line-height:7.30px;color:#cfd1d4;transform:scaleX(0.965);">cephfsn1-metadata</div>
<div class="t" style="left:469.76px;top:599.02px;font-size:7.30px;line-height:7.30px;color:#cfd1d4;transform:scaleX(0.920);">0 B</div>
<div class="t" style="left:494.01px;top:599.02px;font-size:7.30px;line-height:7.30px;color:#cfd1d4;transform:scaleX(0.920);">0 B</div>
<div class="t" style="left:523.26px;top:599.02px;font-size:7.30px;line-height:7.30px;color:#cfd1d4;transform:scaleX(0.920);">0 B</div>
<div class="t" style="left:341.72px;top:612.17px;font-size:7.30px;line-height:7.30px;color:#cfd1d4;transform:scaleX(0.965);">cephobjectn1.rgw.buckets.data</div>
<div class="t" style="left:469.76px;top:612.22px;font-size:7.30px;line-height:7.30px;color:#cfd1d4;transform:scaleX(0.920);">0 B</div>
<div class="t" style="left:494.01px;top:612.22px;font-size:7.30px;line-height:7.30px;color:#cfd1d4;transform:scaleX(0.920);">0 B</div>
<div class="t" style="left:523.26px;top:612.22px;font-size:7.30px;line-height:7.30px;color:#cfd1d4;transform:scaleX(0.920);">0 B</div>
<div class="t" style="left:341.72px;top:625.37px;font-size:7.30px;line-height:7.30px;color:#cfd1d4;transform:scaleX(0.965);">cephobjectn1.rgw.buckets.index</div>
<div class="t" style="left:469.76px;top:625.42px;font-size:7.30px;line-height:7.30px;color:#cfd1d4;transform:scaleX(0.920);">0 B</div>
<div class="t" style="left:494.01px;top:625.42px;font-size:7.30px;line-height:7.30px;color:#cfd1d4;transform:scaleX(0.920);">0 B</div>
<div class="t" style="left:523.26px;top:625.42px;font-size:7.30px;line-height:7.30px;color:#cfd1d4;transform:scaleX(0.920);">0 B</div>
<div class="t" style="left:341.72px;top:638.57px;font-size:7.30px;line-height:7.30px;color:#cfd1d4;transform:scaleX(0.965);">cephobjectn1.rgw.buckets.non-ec</div>
<div class="t" style="left:469.76px;top:638.62px;font-size:7.30px;line-height:7.30px;color:#cfd1d4;transform:scaleX(0.920);">0 B</div>
<div class="t" style="left:494.01px;top:638.62px;font-size:7.30px;line-height:7.30px;color:#cfd1d4;transform:scaleX(0.920);">0 B</div>
<div class="t" style="left:523.26px;top:638.62px;font-size:7.30px;line-height:7.30px;color:#cfd1d4;transform:scaleX(0.920);">0 B</div>
<div class="t" style="left:341.72px;top:651.77px;font-size:7.30px;line-height:7.30px;color:#cfd1d4;transform:scaleX(0.965);">cephobjectn1.rgw.control</div>
<div class="t" style="left:469.76px;top:651.82px;font-size:7.30px;line-height:7.30px;color:#cfd1d4;transform:scaleX(0.920);">0 B</div>
<div class="t" style="left:494.01px;top:651.82px;font-size:7.30px;line-height:7.30px;color:#cfd1d4;transform:scaleX(0.920);">0 B</div>
<div class="t" style="left:523.26px;top:651.82px;font-size:7.30px;line-height:7.30px;color:#cfd1d4;transform:scaleX(0.920);">0 B</div>
<div class="t" style="left:341.72px;top:664.97px;font-size:7.30px;line-height:7.30px;color:#cfd1d4;transform:scaleX(0.965);">cephobjectn1.rgw.log</div>
<div class="t" style="left:469.76px;top:665.02px;font-size:7.30px;line-height:7.30px;color:#cfd1d4;transform:scaleX(0.920);">0 B</div>
<div class="t" style="left:494.01px;top:665.02px;font-size:7.30px;line-height:7.30px;color:#cfd1d4;transform:scaleX(0.920);">0 B</div>
<div class="t" style="left:523.26px;top:665.02px;font-size:7.30px;line-height:7.30px;color:#cfd1d4;transform:scaleX(0.920);">0 B</div>
<div class="t" style="left:739.15px;top:538.73px;font-size:8.00px;line-height:8.00px;color:#c9cbcf;font-weight:bold;transform:scaleX(0.955);">Pool Objects Recovered</div>
<div class="t" style="left:558.52px;top:557.22px;font-size:7.20px;line-height:7.20px;color:#bfc2c6;transform:scaleX(0.920);">1.0</div>
<div class="t" style="left:558.56px;top:583.02px;font-size:7.20px;line-height:7.20px;color:#bfc2c6;transform:scaleX(0.920);">0.8</div>
<div class="t" style="left:558.56px;top:608.72px;font-size:7.20px;line-height:7.20px;color:#bfc2c6;transform:scaleX(0.920);">0.6</div>
<div class="t" style="left:558.49px;top:634.72px;font-size:7.20px;line-height:7.20px;color:#bfc2c6;transform:scaleX(0.920);">0.4</div>
<div class="t" style="left:558.62px;top:660.82px;font-size:7.20px;line-height:7.20px;color:#bfc2c6;transform:scaleX(0.920);">0.2</div>
<div class="t" style="left:949.48px;top:560.37px;font-size:7.30px;line-height:7.30px;color:#33a2e5;font-weight:bold;transform:scaleX(0.920);">max</div>
<div class="t" style="left:970.84px;top:560.37px;font-size:7.30px;line-height:7.30px;color:#33a2e5;font-weight:bold;transform:scaleX(0.920);">avg</div>
<div class="t" style="left:988.35px;top:560.37px;font-size:7.30px;line-height:7.30px;color:#33a2e5;font-weight:bold;transform:scaleX(0.920);">current</div>
<div class="t" style="left:918.96px;top:572.32px;font-size:7.30px;line-height:7.30px;color:#cfd1d4;transform:scaleX(0.965);">Value</div>
<div class="t" style="left:959.51px;top:572.37px;font-size:7.30px;line-height:7.30px;color:#cfd1d4;transform:scaleX(0.920);">0</div>
<div class="t" style="left:978.51px;top:572.37px;font-size:7.30px;line-height:7.30px;color:#cfd1d4;transform:scaleX(0.920);">0</div>
<div class="t" style="left:1008.51px;top:572.37px;font-size:7.30px;line-height:7.30px;color:#cfd1d4;transform:scaleX(0.920);">0</div>
<div class="t" style="left:1036.38px;top:557.42px;font-size:7.20px;line-height:7.20px;color:#bfc2c6;transform:scaleX(0.920);">700 K</div>
<div class="t" style="left:1036.38px;top:576.02px;font-size:7.20px;line-height:7.20px;color:#bfc2c6;transform:scaleX(0.920);">600 K</div>
<div class="t" style="left:1036.38px;top:594.22px;font-size:7.20px;line-height:7.20px;color:#bfc2c6;transform:scaleX(0.920);">500 K</div>
<div class="t" style="left:1036.38px;top:612.92px;font-size:7.20px;line-height:7.20px;color:#bfc2c6;transform:scaleX(0.920);">400 K</div>
<div class="t" style="left:1036.38px;top:631.92px;font-size:7.20px;line-height:7.20px;color:#bfc2c6;transform:scaleX(0.920);">300 K</div>
<div class="t" style="left:1036.38px;top:650.42px;font-size:7.20px;line-height:7.20px;color:#bfc2c6;transform:scaleX(0.920);">200 K</div>
<div class="t" style="left:1036.38px;top:668.92px;font-size:7.20px;line-height:7.20px;color:#bfc2c6;transform:scaleX(0.920);">100 K</div>
</body></html>
